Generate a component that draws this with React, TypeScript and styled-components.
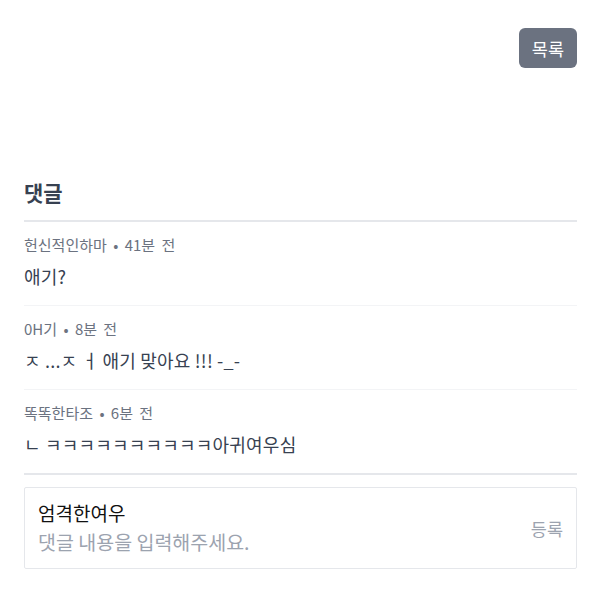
import styled, { createGlobalStyle } from "styled-components";

const GlobalStyle = createGlobalStyle`
  body {
    margin: 0;
    background: #ffffff;
    font-family: "Noto Sans CJK KR", "Noto Sans", sans-serif;
  }
`;

const Page = styled.main`
  padding: 28px 23px 0 24px;
  display: flex;
  flex-direction: column;
`;

const TopBar = styled.div`
  display: flex;
  justify-content: flex-end;
`;

const ListButton = styled.button`
  background: #6b7280;
  color: #ffffff;
  border: none;
  border-radius: 6px;
  padding: 0 13px;
  height: 40px;
  font-family: inherit;
  font-size: 17.5px;
  cursor: pointer;
`;

const Section = styled.section`
  margin-top: 108px;
`;

const Heading = styled.h2`
  margin: 0;
  padding-bottom: 12px;
  font-size: 21px;
  line-height: 32px;
  font-weight: 700;
  color: #374151;
  border-bottom: 2px solid #e5e7eb;
`;

const CommentList = styled.ul`
  list-style: none;
  margin: 0;
  padding: 0;
  border-bottom: 2px solid #e5e7eb;
`;

const CommentItem = styled.li`
  padding: 13px 0 16px;
  display: flex;
  flex-direction: column;
  gap: 8px;

  & + & {
    border-top: 1px solid #f3f4f6;
  }
`;

const Meta = styled.div`
  font-size: 15px;
  line-height: 20px;
  color: #6b7280;
  word-spacing: 3px;
`;

const Body = styled.p`
  margin: 0;
  font-size: 18px;
  line-height: 26px;
  color: #374151;
  letter-spacing: 0.2px;
`;

const InputBox = styled.div`
  margin-top: 12px;
  border: 1px solid #e5e7eb;
  border-radius: 2px;
  padding: 11px 13px 11px 13px;
  display: flex;
  align-items: center;
  justify-content: space-between;
`;

const InputFields = styled.div`
  display: flex;
  flex-direction: column;
`;

const Author = styled.div`
  font-size: 19px;
  line-height: 28px;
  color: #111111;
`;

const Placeholder = styled.div`
  font-size: 19.5px;
  line-height: 30px;
  color: #9ca3af;
`;

const SubmitButton = styled.button`
  background: none;
  border: none;
  font-family: inherit;
  font-size: 17.5px;
  color: #9ca3af;
  padding: 0;
  cursor: pointer;
`;

const comments = [
  { author: "헌신적인하마", time: "41분 전", text: "애기?" },
  { author: "0H기", time: "8분 전", text: "ㅈ ...ㅈ ㅓ 애기 맞아요 !!! -_-" },
  { author: "똑똑한타조", time: "6분 전", text: "ㄴ ㅋㅋㅋㅋㅋㅋㅋㅋㅋㅋ아귀여우심" },
];

export default function App() {
  return (
    <>
      <GlobalStyle />
      <Page>
        <TopBar>
          <ListButton>목록</ListButton>
        </TopBar>
        <Section>
          <Heading>댓글</Heading>
          <CommentList>
            {comments.map((c) => (
              <CommentItem key={c.author}>
                <Meta>
                  {c.author} • {c.time}
                </Meta>
                <Body>{c.text}</Body>
              </CommentItem>
            ))}
          </CommentList>
          <InputBox>
            <InputFields>
              <Author>엄격한여우</Author>
              <Placeholder>댓글 내용을 입력해주세요.</Placeholder>
            </InputFields>
            <SubmitButton>등록</SubmitButton>
          </InputBox>
        </Section>
      </Page>
    </>
  );
}
